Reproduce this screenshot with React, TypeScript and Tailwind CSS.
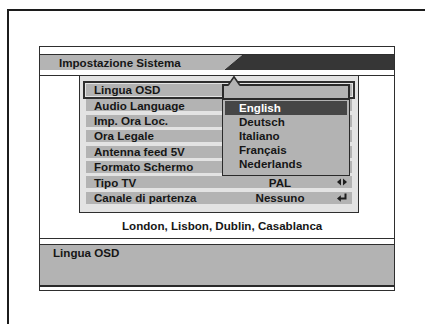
import React from "react";

const rows = [
  { label: "Lingua OSD", value: "", icon: "" },
  { label: "Audio Language", value: "", icon: "" },
  { label: "Imp. Ora Loc.", value: "", icon: "" },
  { label: "Ora Legale", value: "", icon: "" },
  { label: "Antenna feed 5V", value: "", icon: "" },
  { label: "Formato Schermo", value: "", icon: "" },
  { label: "Tipo TV", value: "PAL", icon: "lr" },
  { label: "Canale di partenza", value: "Nessuno", icon: "enter" },
];

const languages = ["English", "Deutsch", "Italiano", "Français", "Nederlands"];

const LeftRight = () => (
  <svg width="10" height="8" viewBox="0 0 10 8" aria-hidden="true">
    <polygon points="0,4 4,0.5 4,7.5" fill="#1e1e1e" />
    <polygon points="6,0.5 10,4 6,7.5" fill="#1e1e1e" />
  </svg>
);

const Enter = () => (
  <svg width="10" height="9" viewBox="0 0 10 9" aria-hidden="true">
    <path d="M8.5 0.5 V5.5 H3" stroke="#1e1e1e" strokeWidth="2" fill="none" />
    <polygon points="0,5.5 3.8,2.2 3.8,8.8" fill="#1e1e1e" />
  </svg>
);

const App = () => {
  return (
    <div className="w-[425px] h-[324px] overflow-hidden bg-white pl-[7px] pt-[9px] font-['Liberation_Sans',Arial,sans-serif] font-bold text-[11.6px] text-[#161616]">
      <div className="w-[520px] h-[400px] border-l-2 border-t-2 border-[#1c1c1c] pl-[30px] pt-[35px]">
        <div className="w-[356px] border border-[#2e2e2e]">
          {/* title bar */}
          <div className="h-[7px]" />
          <div className="flex h-[16px] border-t border-[#2e2e2e]">
            <div className="flex w-[185px] items-center bg-[#b4b4b4] pl-[19px] leading-none">
              Impostazione Sistema
            </div>
            <svg width="18" height="15" viewBox="0 0 18 15" preserveAspectRatio="none" aria-hidden="true">
              <polygon points="0,0 18,0 0,15" fill="#b4b4b4" />
              <polygon points="18,0 18,15 0,15" fill="#363636" />
              <line x1="0" y1="15" x2="18" y2="0" stroke="#2a2a2a" strokeWidth="1" />
            </svg>
            <div className="flex-1 bg-[#363636]" />
          </div>
          <div className="h-[6px] border-b border-[#2e2e2e]" />

          {/* menu content */}
          <div className="relative h-[162px]">
            <div className="ml-[39px] flex w-[280px] flex-col gap-[3.4px] border-x border-b border-[#2e2e2e] bg-[#e3e3e3] px-[6px] pt-[8px] pb-[8px]">
              {rows.map((row, i) => (
                <div
                  key={row.label}
                  className={
                    i === 0
                      ? "flex h-[12px] items-center bg-[#b3b3b3] pl-[8px] leading-none outline-2 outline-offset-1 outline-[#2e2e2e]"
                      : "flex h-[12px] items-center bg-[#b3b3b3] pl-[8px] leading-none"
                  }
                >
                  <span className="w-[146px] whitespace-nowrap">{row.label}</span>
                  <span className="w-[80px] text-center">{row.value}</span>
                  <span className="ml-[17px] flex w-[10px] items-center">
                    {row.icon === "lr" && <LeftRight />}
                    {row.icon === "enter" && <Enter />}
                  </span>
                </div>
              ))}
            </div>

            <p className="mt-[6px] h-[14px] pl-[82px] leading-[14px]">London, Lisbon, Dublin, Casablanca</p>

            {/* language popup */}
            <div className="absolute left-[182px] top-[8px] w-[128px]">
              <div className="h-[16px] border-2 border-[#2a2a2a] bg-[#b3b3b3]" />
              <svg className="absolute left-[5px] top-[-8px]" width="14" height="11" viewBox="0 0 14 11" aria-hidden="true">
                <polygon points="0.5,11 7,0.8 13.5,11" fill="#b3b3b3" />
                <polyline points="0,8.8 1.5,8.8 7,0.8 12.5,8.8 14,8.8" stroke="#2a2a2a" strokeWidth="1.6" fill="none" />
              </svg>
              <div className="border-x border-b border-[#2a2a2a] bg-[#b3b3b3] px-[2px] pt-[1px] pb-[4px]">
                {languages.map((lang, i) => (
                  <div
                    key={lang}
                    className={
                      i === 0
                        ? "flex h-[14px] items-center bg-[#464646] pl-[14px] leading-none text-white"
                        : "flex h-[14px] items-center pl-[14px] leading-none"
                    }
                  >
                    {lang}
                  </div>
                ))}
              </div>
            </div>
          </div>

          {/* info area */}
          <div className="h-[6px] border-t border-[#2e2e2e]" />
          <div className="h-[41px] border-t border-[#2e2e2e] bg-[#b3b3b3] pl-[13px] pt-[1px] leading-[14px]">
            Lingua OSD
          </div>
          <div className="h-[5px] border-t-2 border-[#2a2a2a]" />
        </div>
      </div>
    </div>
  );
};

export default App;
